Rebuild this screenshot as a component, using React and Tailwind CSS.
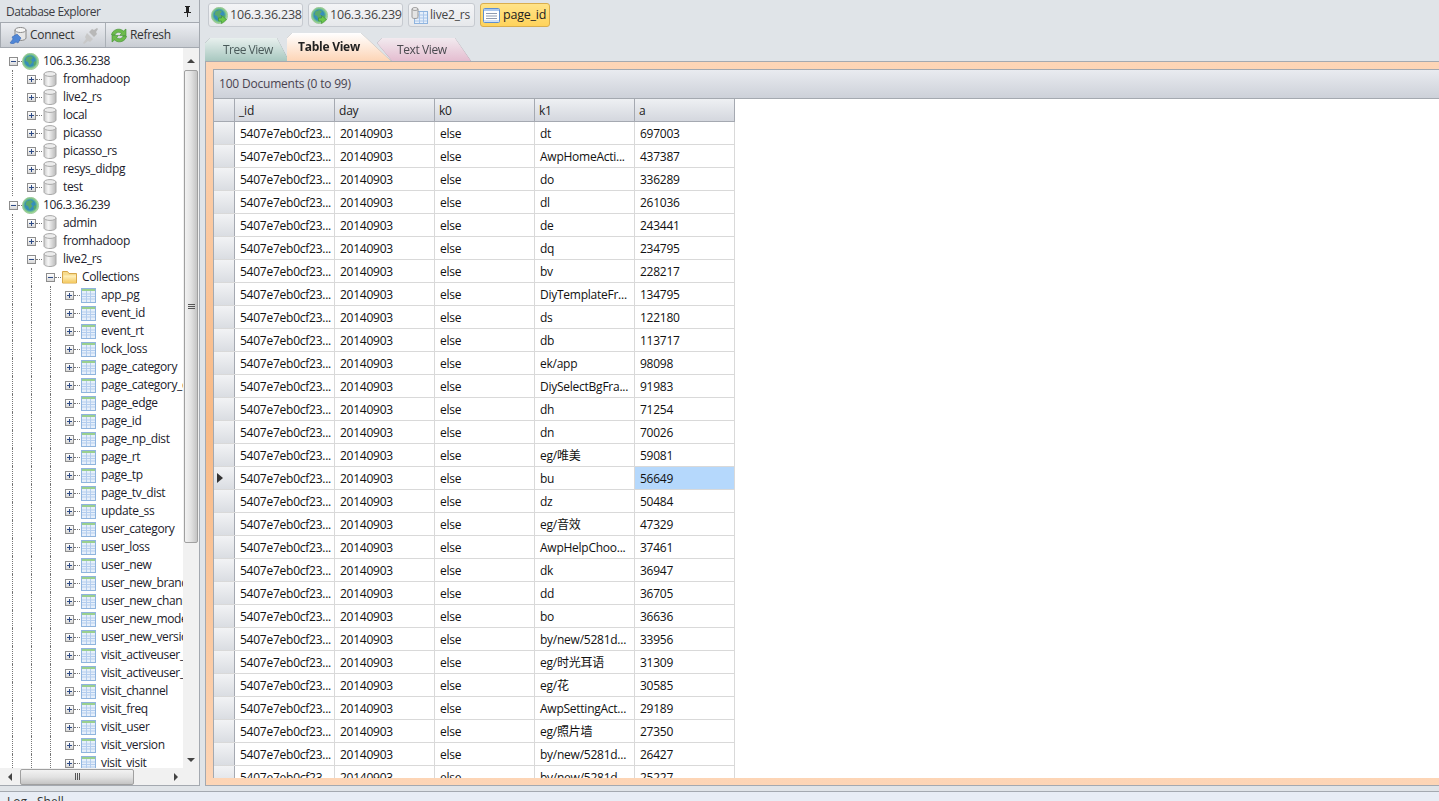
import React from "react";

const FONT = "[font-family:'Open_Sans','Noto_Sans_CJK_SC',sans-serif]";

function Globe({ arrow = false, size = 17 }) {
  return (
    <svg width={size} height={size} viewBox="0 0 17 17" className="shrink-0">
      <defs>
        <radialGradient id="gl" cx="48%" cy="48%" r="55%">
          <stop offset="0" stopColor="#3a8ad8" />
          <stop offset="0.55" stopColor="#3590b0" />
          <stop offset="0.8" stopColor="#8ccf88" />
          <stop offset="1" stopColor="#d2eebe" />
        </radialGradient>
      </defs>
      <circle cx="8.5" cy="8.5" r="8.2" fill="url(#gl)" stroke="#86b98a" strokeWidth="0.6" />
      <path d="M4.500 4.500l4-1.500 2.500 1.500-2 2.500 1.500 2-3 3.500-1.500-3.500-2.500-1z" fill="#5aa86c" />
      <path d="M11.500 9l2.500-1v3l-2 2z" fill="#5aa86c" />
      {arrow && <path d="M7.500 11h3V8.500l5 4-5 4V14h-3z" fill="#6cc84c" stroke="#3f9030" strokeWidth="0.6" />}
    </svg>
  );
}

function Db() {
  return (
    <svg width="14" height="16" viewBox="0 0 14 16" className="shrink-0">
      <defs>
        <linearGradient id="dbg" x1="0" x2="1" y1="0" y2="0">
          <stop offset="0" stopColor="#c9c9c9" />
          <stop offset="0.35" stopColor="#f6f6f6" />
          <stop offset="1" stopColor="#b8b8b8" />
        </linearGradient>
      </defs>
      <path d="M1 3v10c0 1.400 2.700 2.500 6 2.500s6-1.100 6-2.500V3z" fill="url(#dbg)" stroke="#a8a8a8" />
      <ellipse cx="7" cy="3" rx="6" ry="2.400" fill="#ececec" stroke="#a8a8a8" />
    </svg>
  );
}

function TableIcon({ size = 15 }) {
  return (
    <svg width={size} height={size} viewBox="0 0 15 15" className="shrink-0">
      <rect x="0.500" y="0.500" width="14" height="14" fill="#e6effa" stroke="#8fb4de" />
      <rect x="1" y="1" width="13" height="2" fill="#9ad08e" />
      <path d="M1 6h13M1 8.500h13M1 11h13M5.500 3V14M9.500 3V14" stroke="#b3cdee" strokeWidth="1" fill="none" />
    </svg>
  );
}

function DbTableIcon() {
  return (
    <svg width="17" height="17" viewBox="0 0 17 17" className="shrink-0">
      <rect x="3.500" y="4.500" width="13" height="12" fill="#e6effa" stroke="#8fb4de" />
      <path d="M4 8h12M4 11h12M4 14h12M8.500 5V16M12.500 5V16" stroke="#a9c6ea" fill="none" />
      <path d="M1 2v8c0 1 1.200 1.500 3 1.500S7 11 7 10V2z" fill="#e4e4e4" stroke="#9a9a9a" />
      <ellipse cx="4" cy="2" rx="3" ry="1.400" fill="#f4f4f4" stroke="#9a9a9a" />
    </svg>
  );
}

function DocIcon() {
  return (
    <svg width="17" height="15" viewBox="0 0 17 15" className="shrink-0">
      <rect x="0.500" y="0.500" width="16" height="14" rx="1" fill="#fff" stroke="#5f8fd0" />
      <rect x="1" y="1" width="15" height="2" fill="#a9c6ee" />
      <path d="M3 5.500h11M3 8h11M3 10.500h11" stroke="#8f9bb0" fill="none" />
      <rect x="1" y="12" width="15" height="2" fill="#cfe0f6" />
    </svg>
  );
}

function Folder() {
  return (
    <svg width="15" height="14" viewBox="0 0 15 14" className="shrink-0">
      <defs>
        <linearGradient id="fo" x1="0" x2="0" y1="0" y2="1">
          <stop offset="0" stopColor="#fff3c4" />
          <stop offset="1" stopColor="#f3c75c" />
        </linearGradient>
      </defs>
      <path d="M0.500 13V1.500h5l1.500 2h7.500V13z" fill="#f7dc8e" stroke="#d6a64a" />
      <path d="M1.500 13V5.500h12.500V13z" fill="url(#fo)" />
    </svg>
  );
}

function Expander({ open }) {
  return (
    <span className="relative block w-[9px] h-[9px] border border-[#8d8d8d] bg-[linear-gradient(#ffffff,#d8d8d8)]">
      <span className="absolute left-[1px] top-[3px] w-[5px] h-[1px] bg-[#2c4a86]" />
      {!open && <span className="absolute left-[3px] top-[1px] w-[1px] h-[5px] bg-[#2c4a86]" />}
    </span>
  );
}

function TreeRow({ level, kind, label, open }) {
  const guides = Array.from({ length: level });
  const text = level === 0 ? "ml-[4px]" : level === 1 ? "ml-[6px]" : "ml-[5px]";
  return (
    <div className="flex h-[18px] items-center whitespace-nowrap">
      {guides.map((_, i) => (
        <div key={i} className="w-[19px] h-[18px] pl-[12px] shrink-0">
          <div className="h-full border-l border-dotted border-[#777]" />
        </div>
      ))}
      {level === 0 ? (
        <div className="relative w-[21px] h-[18px] shrink-0 flex items-center pl-[9px]">
          <Expander open={open} />
          <span className="absolute left-[18px] top-[8.500px] w-[4px] border-t border-dotted border-[#777]" />
        </div>
      ) : (
        <div className="relative w-[23px] h-[18px] shrink-0 flex items-center pl-[8px]">
          <Expander open={open} />
          <span className="absolute left-[17px] top-[8.500px] w-[6px] border-t border-dotted border-[#777]" />
        </div>
      )}
      <div className="ml-[1px]">
        {kind === "server" && <Globe />}
        {kind === "db" && <Db />}
        {kind === "folder" && <Folder />}
        {kind === "table" && <TableIcon />}
      </div>
      <span className={`${text} text-[12px] text-[#1b1b2b] tracking-[-0.35px]`}>{label}</span>
    </div>
  );
}

const tree = [
  [0, "server", "106.3.36.238", true],
  ...["fromhadoop", "live2_rs", "local", "picasso", "picasso_rs", "resys_didpg", "test"].map((x) => [1, "db", x, false]),
  [0, "server", "106.3.36.239", true],
  [1, "db", "admin", false],
  [1, "db", "fromhadoop", false],
  [1, "db", "live2_rs", true],
  [2, "folder", "Collections", true],
  ...[
    "app_pg", "event_id", "event_rt", "lock_loss", "page_category", "page_category_dist", "page_edge", "page_id",
    "page_np_dist", "page_rt", "page_tp", "page_tv_dist", "update_ss", "user_category", "user_loss", "user_new",
    "user_new_brand", "user_new_channel", "user_new_model", "user_new_version", "visit_activeuser_a",
    "visit_activeuser_b", "visit_channel", "visit_freq", "visit_user", "visit_version", "visit_visit",
  ].map((x) => [3, "table", x, false]),
];

const rows = [
  ["dt", "697003"], ["AwpHomeActi...", "437387"], ["do", "336289"], ["dl", "261036"], ["de", "243441"],
  ["dq", "234795"], ["bv", "228217"], ["DiyTemplateFr...", "134795"], ["ds", "122180"], ["db", "113717"],
  ["ek/app", "98098"], ["DiySelectBgFra...", "91983"], ["dh", "71254"], ["dn", "70026"], ["eg/唯美", "59081"],
  ["bu", "56649"], ["dz", "50484"], ["eg/音效", "47329"], ["AwpHelpChoo...", "37461"], ["dk", "36947"],
  ["dd", "36705"], ["bo", "36636"], ["by/new/5281d...", "33956"], ["eg/时光耳语", "31309"], ["eg/花", "30585"],
  ["AwpSettingAct...", "29189"], ["eg/照片墙", "27350"], ["by/new/5281d...", "26427"], ["by/new/5281d...", "25227"],
];

function Cell({ children, selected }) {
  return (
    <div
      className={`w-[100px] shrink-0 h-full border-r border-[#d9d9d9] pl-[5px] pt-[1px] flex items-center overflow-hidden whitespace-nowrap text-[12px] text-[#111] tracking-[-0.25px] ${
        selected ? "bg-[#b5d8fc]" : ""
      }`}
    >
      {children}
    </div>
  );
}

function HeadCell({ children }) {
  return (
    <div className="w-[100px] shrink-0 h-full border-r border-[#a5a9b1] pl-[4px] pt-[1px] flex items-center text-[12px] text-[#222] tracking-[-0.2px]">
      {children}
    </div>
  );
}

function DocTab({ icon, label, w, active, size = "text-[12.500px]", gap = "gap-[2px]" }) {
  return (
    <div
      className={`h-[24px] ${w} flex items-center ${gap} pl-[2px] rounded-[3px] border ${
        active
          ? "border-[#d9ae4e] bg-[linear-gradient(#ffe388,#ffd35c)] text-[#222]"
          : "border-[#c6cad0] bg-[linear-gradient(#f4f5f7,#e6e8eb)] text-[#444]"
      }`}
    >
      {icon}
      <span className={`${size} tracking-[-0.2px]`}>{label}</span>
    </div>
  );
}

function Arrow({ dir }) {
  const map = {
    up: "0,6 4,2 8,6",
    down: "0,2 8,2 4,6",
    left: "6,0 6,8 2,4",
    right: "2,0 2,8 6,4",
  };
  return (
    <svg width="8" height="8" viewBox="0 0 8 8">
      <polygon points={map[dir]} fill="#444" />
    </svg>
  );
}

function Grip({ vertical }) {
  const c = vertical ? "w-[7px] h-[1px] bg-[#555]" : "w-[1px] h-[7px] bg-[#555]";
  return (
    <div className={`flex ${vertical ? "flex-col" : ""} gap-[1px]`}>
      <span className={c} />
      <span className={c} />
      <span className={c} />
    </div>
  );
}

export default function App() {
  return (
    <div className={`h-[801px] w-[1439px] overflow-hidden flex flex-col bg-[#e0e4e8] ${FONT}`}>
      <div className="flex h-[786px] shrink-0">
        {/* left */}
        <div className="w-[200px] shrink-0 flex flex-col border-r border-b border-[#a4a9b0] h-[786px]">
          <div className="h-[22px] shrink-0 flex items-center justify-between pl-[6px] pr-[7px] pt-[2px] text-[12px] tracking-[-0.5px] text-[#3c3c44]">
            <span>Database Explorer</span>
            <svg width="9" height="12" viewBox="0 0 9 12">
              <path d="M2 0h5v1H6v5h2v1H5v4H4V7H1V6h2V1H2z" fill="#222" />
            </svg>
          </div>
          <div className="h-[26px] shrink-0 flex items-center border-t border-l border-b border-[#a4a9b0] bg-[linear-gradient(#eceef2,#c9cdd3)] text-[12px] tracking-[-0.3px] text-[#333]">
            <div className="flex items-center h-full pl-[8px] w-[105px] border-r border-[#aab0b6]">
              <svg width="18" height="18" viewBox="0 0 18 18" className="shrink-0">
                <path d="M6 4v8c0 1.400 2.500 2.500 5.500 2.500S17 13.400 17 12V4z" fill="#e6e6e6" stroke="#8a8a8a" />
                <ellipse cx="11.500" cy="4" rx="5.500" ry="2.500" fill="#f6f6f6" stroke="#8a8a8a" />
                <path d="M1 17l3-4-1-2 5-3 4 4-3 5-2-1-3 2z" fill="#4f86d6" stroke="#2f5fae" strokeWidth="0.5" />
              </svg>
              <span className="ml-[3px]">Connect</span>
              <svg width="17" height="17" viewBox="0 0 17 17" className="ml-[8px] shrink-0">
                <path d="M10 2l2 1 3-2 1 1-2 3 1 2-3 3-5-5z" fill="#b8b8b8" />
                <path d="M5 6l6 6-3 3-2-1-4 3-1-1 3-4-1-2z" fill="#c8c8c8" />
              </svg>
            </div>
            <div className="flex items-center pl-[4px]">
              <svg width="18" height="17" viewBox="0 0 18 17" className="shrink-0">
                <path d="M1.500 8C2 3 9 0 13.500 4L16 2v6.500H9.500l2-2C9 4.500 6 5 5 8z" fill="#6dbb4d" stroke="#3f8f30" strokeWidth="0.6" />
                <path d="M16.500 9c-.5 5-7.500 8-12 4L2 15V8.500h6.500l-2 2c2.500 2 5.500 1.500 6.500-1.500z" fill="#6dbb4d" stroke="#3f8f30" strokeWidth="0.6" />
              </svg>
              <span className="ml-[2px]">Refresh</span>
            </div>
          </div>
          <div className="flex h-[720px] shrink-0 bg-white">
            <div className="w-[183px] shrink-0 overflow-hidden pt-[4px]">
              {tree.map(([l, kind, label, open], i) => (
                <TreeRow key={i} level={l} kind={kind} label={label} open={open} />
              ))}
            </div>
            <div className="w-[16px] shrink-0 flex flex-col bg-[#f1f1f1]">
              <div className="h-[22px] shrink-0 flex items-center justify-center pt-[3px]"><Arrow dir="up" /></div>
              <div className="h-[473px] shrink-0 mx-[1px] rounded-[2px] border border-[#a0a0a0] bg-[linear-gradient(90deg,#f2f2f2,#e2e2e2_50%,#c4c4c4)] flex items-center justify-center">
                <Grip vertical />
              </div>
              <div className="flex-1" />
              <div className="h-[16px] shrink-0 flex items-center justify-center"><Arrow dir="down" /></div>
            </div>
          </div>
          <div className="h-[17px] shrink-0 flex items-center bg-[#f1f1f1]">
            <div className="w-[20px] flex justify-center"><Arrow dir="left" /></div>
            <div className="w-[114px] h-[16px] rounded-[2px] border border-[#a0a0a0] bg-[linear-gradient(#f2f2f2,#e2e2e2_50%,#c4c4c4)] flex items-center justify-center">
              <Grip />
            </div>
            <div className="flex-1 flex justify-end pr-[19px]"><Arrow dir="right" /></div>
          </div>
        </div>

        {/* right */}
        <div className="flex-1 min-w-0 ml-[5px] flex flex-col h-[786px]">
          <div className="h-[33px] shrink-0 flex gap-[5px] pl-[3px] pt-[3px]">
            <DocTab icon={<Globe arrow />} label="106.3.36.238" w="w-[95px]" />
            <DocTab icon={<Globe arrow />} label="106.3.36.239" w="w-[95px]" />
            <DocTab icon={<DbTableIcon />} label="live2_rs" w="w-[67px]" size="text-[12px]" />
            <DocTab icon={<DocIcon />} label="page_id" w="w-[70px]" size="text-[12.500px]" gap="gap-[3px]" active />
          </div>
          <div className="h-[28px] shrink-0 flex items-end relative">
            <div className="[filter:drop-shadow(0_0_0.6px_#7f868c)]">
              <div className="w-[84px] h-[23px] bg-[linear-gradient(#e8f0ee,#a8c8c0)] [clip-path:polygon(0_100%,0_5px,5px_0,72px_0,100%_100%)] flex items-center pl-[18px] text-[12px] text-[#4a5a5a] tracking-[-0.5px]">
                Tree View
              </div>
            </div>
            <div className="[filter:drop-shadow(0_0_0.6px_#7f868c)] -ml-[2px] z-10">
              <div className="w-[104px] h-[28px] bg-[linear-gradient(#ffffff,#fdd5b6)] [clip-path:polygon(0_100%,0_5px,5px_0,74px_0,100%_100%)] flex items-center pl-[11px] pb-[1px] text-[12px] font-bold text-[#222] tracking-[-0.25px]">
                Table View
              </div>
            </div>
            <div className="[filter:drop-shadow(0_0_0.6px_#7f868c)] -ml-[14px]">
              <div className="w-[94px] h-[23px] bg-[linear-gradient(#f2eaef,#e4bdd0)] [clip-path:polygon(15px_100%,0_5px,5px_0,78px_0,100%_100%)] flex items-center pl-[20px] text-[12px] text-[#4a4a50] tracking-[-0.4px]">
                Text View
              </div>
            </div>
          </div>
          <div className="h-[725px] shrink-0 flex flex-col border-t border-l border-b border-[#a4a9b0] bg-[linear-gradient(#fdd5b6,#f8ba86_50%,#fdd5b6)] pt-[7px] pb-[7px] pl-[7px] overflow-hidden">
            <div className="flex-1 min-h-0 flex flex-col border-t border-l border-[#a4a9b0] bg-white">
              <div className="h-[29px] shrink-0 flex items-center pl-[5px] border-b border-[#a4a9b0] bg-[linear-gradient(#e9ebf0,#cdd1d9)] text-[12px] text-[#4a4450] tracking-[-0.2px]">
                100 Documents (0 to 99)
              </div>
              <div className="flex-1 min-h-0 overflow-hidden">
                <div className="flex h-[23px] w-[521px] border-b border-[#a5a9b1] bg-[linear-gradient(#eef0f3,#d4d7de)]">
                  <div className="w-[21px] shrink-0 border-r border-[#a5a9b1]" />
                  {["_id", "day", "k0", "k1", "a"].map((h) => (
                    <HeadCell key={h}>{h}</HeadCell>
                  ))}
                </div>
                {rows.map(([k1, a], i) => (
                  <div key={i} className="flex h-[23px] w-[521px] border-b border-[#d9d9d9]">
                    <div className="w-[21px] shrink-0 border-r border-[#a5a9b1] bg-[linear-gradient(#f2f3f5,#dadde2)] flex items-center pl-[3px]">
                      {i === 15 && (
                        <svg width="6" height="10" viewBox="0 0 6 10">
                          <polygon points="0,0 6,5 0,10" fill="#333" />
                        </svg>
                      )}
                    </div>
                    <Cell>5407e7eb0cf23...</Cell>
                    <Cell>20140903</Cell>
                    <Cell>else</Cell>
                    <Cell>{k1}</Cell>
                    <Cell selected={i === 15}>{a}</Cell>
                  </div>
                ))}
              </div>
            </div>
          </div>
        </div>
      </div>
      <div className="mt-[5px] h-[10px] shrink-0 border-t border-[#a4a9b0] bg-[#e8edf5] overflow-hidden flex pl-[7px] text-[12px] text-[#333] pt-[3px] leading-[14px]">
        <span className="w-[30px]">Log</span>
        <span>Shell</span>
      </div>
    </div>
  );
}
